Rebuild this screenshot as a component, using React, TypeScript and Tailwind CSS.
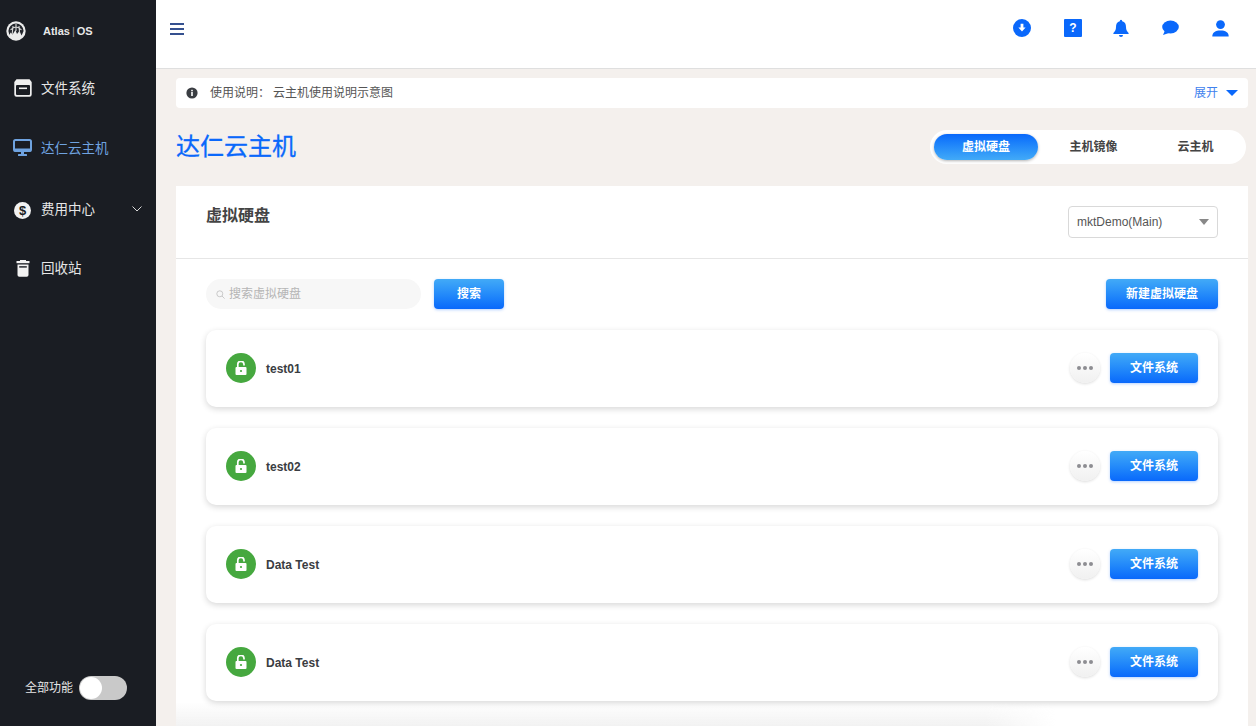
import React from "react";

const FONT = '"Liberation Sans", "Noto Sans CJK SC", sans-serif';
const BTN = "bg-gradient-to-b from-[#42aaf7] to-[#0a68fb] text-white font-bold text-[12px] rounded-[4px] shadow-[0_1px_3px_rgba(10,104,251,0.3)] flex items-center justify-center";

function Logo() {
  return (
    <svg width="20" height="20" viewBox="0 0 20 20">
      <circle cx="10" cy="10" r="9.7" fill="#ececec" />
      <path d="M2.4 10 A7.6 7.6 0 0 1 17.6 10 L15.6 14.4 L13.4 10 L11 13 L9.4 9 L6.6 13.5 L4.6 11.5 L3.4 14 Z" fill="#23262c" />
      <path d="M4.5 9 Q10 3 15.5 9 M7 5 L6.2 13 M13 5 L13.6 12 M10 3 V10" stroke="#d8d8d8" strokeWidth="1.1" fill="none" />
    </svg>
  );
}

function NavItem({ icon, label, active, chevron }: { icon: React.ReactNode; label: string; active?: boolean; chevron?: boolean }) {
  return (
    <div className="flex items-center pl-[13px] pr-[14px] h-[20px]">
      <span className="w-[19px] h-[20px] flex items-center justify-center shrink-0">{icon}</span>
      <span className={`ml-[9px] text-[13.5px] leading-[20px] ${active ? "text-[#6fa3e0]" : "text-[#e6e6e6]"}`}>{label}</span>
      {chevron && (
        <svg className="ml-auto mb-[2px]" width="10" height="6" viewBox="0 0 10 6" fill="none">
          <path d="M0.5 0.5 L5 5 L9.5 0.5" stroke="#d8d8d8" strokeWidth="1" />
        </svg>
      )}
    </div>
  );
}

function Sidebar() {
  return (
    <aside className="w-[156px] shrink-0 bg-[#1a1d23] flex flex-col h-full">
      <div className="h-[20px] mt-[21px] pl-[6px] flex items-center">
        <Logo />
        <span className="ml-[17px] text-[11px] font-bold text-[#e8e8e8] leading-none">Atlas<span className="font-normal text-[#999] mx-[2px]">|</span>OS</span>
      </div>
      <div className="mt-[38px] flex flex-col">
        <NavItem
          label="文件系统"
          icon={
            <svg className="mb-[2px]" width="18" height="18" viewBox="0 0 18 18">
              <path d="M2.5 0.3 H15.5 L17.7 3 V15.5 A2.2 2.2 0 0 1 15.5 17.7 H2.5 A2.2 2.2 0 0 1 0.3 15.5 V3 Z" fill="#f0f0f0" />
              <rect x="2" y="6" width="14" height="10" rx="1" fill="#1a1d23" />
              <rect x="5" y="8.5" width="8" height="1.6" fill="#f0f0f0" />
            </svg>
          }
        />
        <div className="mt-[40px]">
          <NavItem
            active
            label="达仁云主机"
            icon={
              <svg className="mb-[4px]" width="19" height="17" viewBox="0 0 19 17">
                <rect x="1" y="1" width="17" height="11" rx="1.5" fill="none" stroke="#6fa3e0" strokeWidth="2" />
                <rect x="1" y="9.5" width="17" height="3" fill="#6fa3e0" />
                <rect x="8" y="12.5" width="3" height="3" fill="#6fa3e0" />
                <rect x="5" y="15" width="9" height="2" rx="0.5" fill="#6fa3e0" />
              </svg>
            }
          />
        </div>
        <div className="mt-[41px]">
          <NavItem
            chevron
            label="费用中心"
            icon={
              <svg width="17" height="17" viewBox="0 0 17 17">
                <circle cx="8.5" cy="8.5" r="8.5" fill="#f2f2f2" />
                <text x="8.5" y="13" textAnchor="middle" fontSize="13" fontWeight="700" fill="#1a1d23" fontFamily="Liberation Sans">$</text>
              </svg>
            }
          />
        </div>
        <div className="mt-[39px]">
          <NavItem
            label="回收站"
            icon={
              <svg className="mb-[2px]" width="14" height="17" viewBox="0 0 14 17">
                <rect x="4" y="0" width="6" height="1.5" fill="#f2f2f2" />
                <rect x="0.5" y="1" width="13" height="2.2" fill="#f2f2f2" />
                <path d="M1.5 4.5 H12.5 V15 A1.8 1.8 0 0 1 10.7 16.8 H3.3 A1.8 1.8 0 0 1 1.5 15 Z" fill="#f2f2f2" />
                <rect x="3.2" y="6.2" width="7.6" height="1.4" fill="#1a1d23" />
              </svg>
            }
          />
        </div>
      </div>
      <div className="mt-auto mb-[26px] ml-[25px] flex items-center">
        <span className="text-[12px] text-[#e6e6e6]">全部功能</span>
        <span className="ml-[6px] w-[48px] h-[24px] rounded-full bg-[#c9c9c9] p-[1px] flex items-center">
          <span className="w-[22px] h-[22px] rounded-full bg-white" />
        </span>
      </div>
    </aside>
  );
}

function TopIcons() {
  const c = "#0a68fb";
  return (
    <div className="flex items-center ml-auto mr-[27px] gap-[33px]">
      <svg width="18" height="18" viewBox="0 0 18 18">
        <circle cx="9" cy="9" r="9" fill={c} />
        <path d="M7.6 4.8 H10.4 V8.6 H12.6 L9 12.6 L5.4 8.6 H7.6 Z" fill="#fff" />
      </svg>
      <span className="w-[18px] h-[18px] rounded-[1px] bg-[#0a68fb] text-white text-[12px] font-bold flex items-center justify-center leading-none">?</span>
      <svg className="ml-[-2px]" width="16" height="18" viewBox="0 0 16 18">
        <path d="M8 0.8 A1.3 1.3 0 0 1 9.2 2.2 C12 3 13 5 13 8 C13 11 14 12.5 15.6 14 V15 H0.4 V14 C2 12.5 3 11 3 8 C3 5 4 3 6.8 2.2 A1.3 1.3 0 0 1 8 0.8 Z" fill={c} />
        <path d="M6 16 H10 A2 2 0 0 1 6 16 Z" fill={c} />
      </svg>
      <svg width="17" height="16" viewBox="0 0 17 16">
        <ellipse cx="8.5" cy="7" rx="8.3" ry="6.5" fill={c} />
        <path d="M3 10.5 L1 15 L7 13 Z" fill={c} />
      </svg>
      <svg width="17" height="17" viewBox="0 0 17 17">
        <circle cx="8.5" cy="4.6" r="4.4" fill={c} />
        <path d="M0.3 16.6 C0.3 12.5 3.5 10.6 8.5 10.6 C13.5 10.6 16.7 12.5 16.7 16.6 Z" fill={c} />
      </svg>
    </div>
  );
}

function Header() {
  return (
    <header className="h-[69px] bg-white border-b border-[#dfdfdf] shrink-0 flex items-start">
      <svg className="ml-[14px] mt-[23px] shrink-0" width="14" height="12" viewBox="0 0 14 12">
        <rect width="14" height="2" y="0" fill="#35508f" />
        <rect width="14" height="2" y="5" fill="#35508f" />
        <rect width="14" height="2" y="10" fill="#35508f" />
      </svg>
      <div className="flex-1 pt-[19px] flex justify-end">
        <TopIcons />
      </div>
    </header>
  );
}

function Notice() {
  return (
    <div className="h-[30px] mt-[9px] bg-white rounded-[4px] flex items-center pl-[10px] pr-[10px] text-[12px] text-[#555]">
      <svg width="12" height="12" viewBox="0 0 12 12">
        <circle cx="6" cy="6" r="5.6" fill="#3a3d42" />
        <rect x="5.2" y="5" width="1.6" height="4" fill="#fff" />
        <rect x="5.2" y="2.8" width="1.6" height="1.5" fill="#fff" />
      </svg>
      <span className="ml-[12px]">使用说明：</span>
      <span className="ml-[3px]">云主机使用说明示意图</span>
      <span className="ml-auto text-[#3f82ee]">展开</span>
      <span className="ml-[8px] w-0 h-0 border-l-[6px] border-r-[6px] border-t-[6px] border-l-transparent border-r-transparent border-t-[#0a68fb]" />
    </div>
  );
}

function Tabs() {
  return (
    <div className="w-[316px] h-[34px] rounded-full bg-white flex items-center pl-[4px] text-[12px] font-bold text-[#444]">
      <span className="w-[104px] h-[26px] shrink-0 rounded-full bg-gradient-to-b from-[#0a68fb] to-[#42aaf7] text-white flex items-center justify-center shadow-[0_1px_3px_rgba(0,0,0,0.3)]">虚拟硬盘</span>
      <span className="w-[111px] shrink-0 text-center">主机镜像</span>
      <span className="w-[93px] shrink-0 text-center">云主机</span>
    </div>
  );
}

function Card({ name }: { name: string }) {
  return (
    <div className="h-[77px] rounded-[10px] bg-white shadow-[0_2px_6px_rgba(0,0,0,0.16)] flex items-center pl-[20px] pr-[20px] shrink-0">
      <span className="w-[30px] h-[30px] rounded-full bg-[#46a83f] flex items-center justify-center mt-[-1px]">
        <svg width="12" height="14" viewBox="0 0 12 14">
          <path d="M2.8 6.5 V3.6 A3.1 3.1 0 0 1 9 3.2 V4.4" stroke="#fff" strokeWidth="1.7" fill="none" />
          <rect x="0.5" y="6" width="11" height="8" rx="1" fill="#fff" />
          <circle cx="6" cy="10" r="1.1" fill="#46a83f" />
        </svg>
      </span>
      <span className="ml-[10px] text-[12px] font-bold text-[#3a3d42]">{name}</span>
      <span className="ml-auto w-[30px] h-[30px] rounded-full bg-gradient-to-b from-white to-[#f0f0f0] shadow-[0_1px_3px_rgba(0,0,0,0.14)] flex items-center justify-center gap-[2px] mt-[-1px]">
        <i className="w-[4px] h-[4px] rounded-full bg-[#8d8d92]" />
        <i className="w-[4px] h-[4px] rounded-full bg-[#8d8d92]" />
        <i className="w-[4px] h-[4px] rounded-full bg-[#8d8d92]" />
      </span>
      <span className={`${BTN} ml-[10px] w-[88px] h-[30px] mt-[-1px]`}>文件系统</span>
    </div>
  );
}

export default function App() {
  return (
    <div className="flex w-[1256px] h-[726px] overflow-hidden bg-[#f4f0ed]" style={{ fontFamily: FONT }}>
      <Sidebar />
      <div className="flex-1 flex flex-col min-w-0 relative">
        <Header />
        <main className="flex-1 min-h-0 pl-[20px] pr-[8px] flex flex-col">
          <Notice />
          <div className="flex items-center justify-between mt-[25px] h-[28px] pr-[2px]">
            <h1 className="text-[24px] leading-[28px] text-[#0a68fb] font-normal [-webkit-text-stroke:0.3px_#0a68fb]">达仁云主机</h1>
            <Tabs />
          </div>
          <section className="mt-[25px] flex-1 min-h-0 bg-white overflow-hidden flex flex-col">
            <div className="h-[73px] border-b border-[#e6e6e6] shrink-0 flex items-start justify-between pl-[30px] pr-[30px]">
              <h2 className="mt-[20px] text-[16px] leading-[20px] font-bold text-[#444]">虚拟硬盘</h2>
              <div className="mt-[20px] w-[150px] h-[32px] rounded-[4px] border border-[#d9d9d9] flex items-center pl-[8px] pr-[8px] text-[12px] text-[#555]">
                mktDemo(Main)
                <span className="ml-auto w-0 h-0 border-l-[5px] border-r-[5px] border-t-[6px] border-l-transparent border-r-transparent border-t-[#888]" />
              </div>
            </div>
            <div className="flex items-center mt-[20px] pl-[30px] pr-[30px] shrink-0">
              <div className="w-[215px] h-[30px] rounded-full bg-[#f7f7f7] flex items-center pl-[10px] text-[12px] text-[#b5b5b5]">
                <svg width="9" height="9" viewBox="0 0 9 9" fill="none" stroke="#c4c4c4" strokeWidth="0.9">
                  <circle cx="3.8" cy="3.8" r="3" />
                  <path d="M6 6 L8.6 8.6" />
                </svg>
                <span className="ml-[4px]">搜索虚拟硬盘</span>
              </div>
              <span className={`${BTN} ml-[13px] w-[70px] h-[30px]`}>搜索</span>
              <span className={`${BTN} ml-auto w-[112px] h-[30px]`}>新建虚拟硬盘</span>
            </div>
            <div className="mt-[21px] pl-[30px] pr-[30px] flex flex-col gap-[21px]">
              <Card name="test01" />
              <Card name="test02" />
              <Card name="Data Test" />
              <Card name="Data Test" />
            </div>
          </section>
        </main>
        <div className="absolute left-[20px] bottom-0 w-[880px] h-[24px] bg-gradient-to-t from-[#f2f2f2] to-transparent [mask-image:linear-gradient(to_right,black_92%,transparent)]" />
      </div>
    </div>
  );
}
